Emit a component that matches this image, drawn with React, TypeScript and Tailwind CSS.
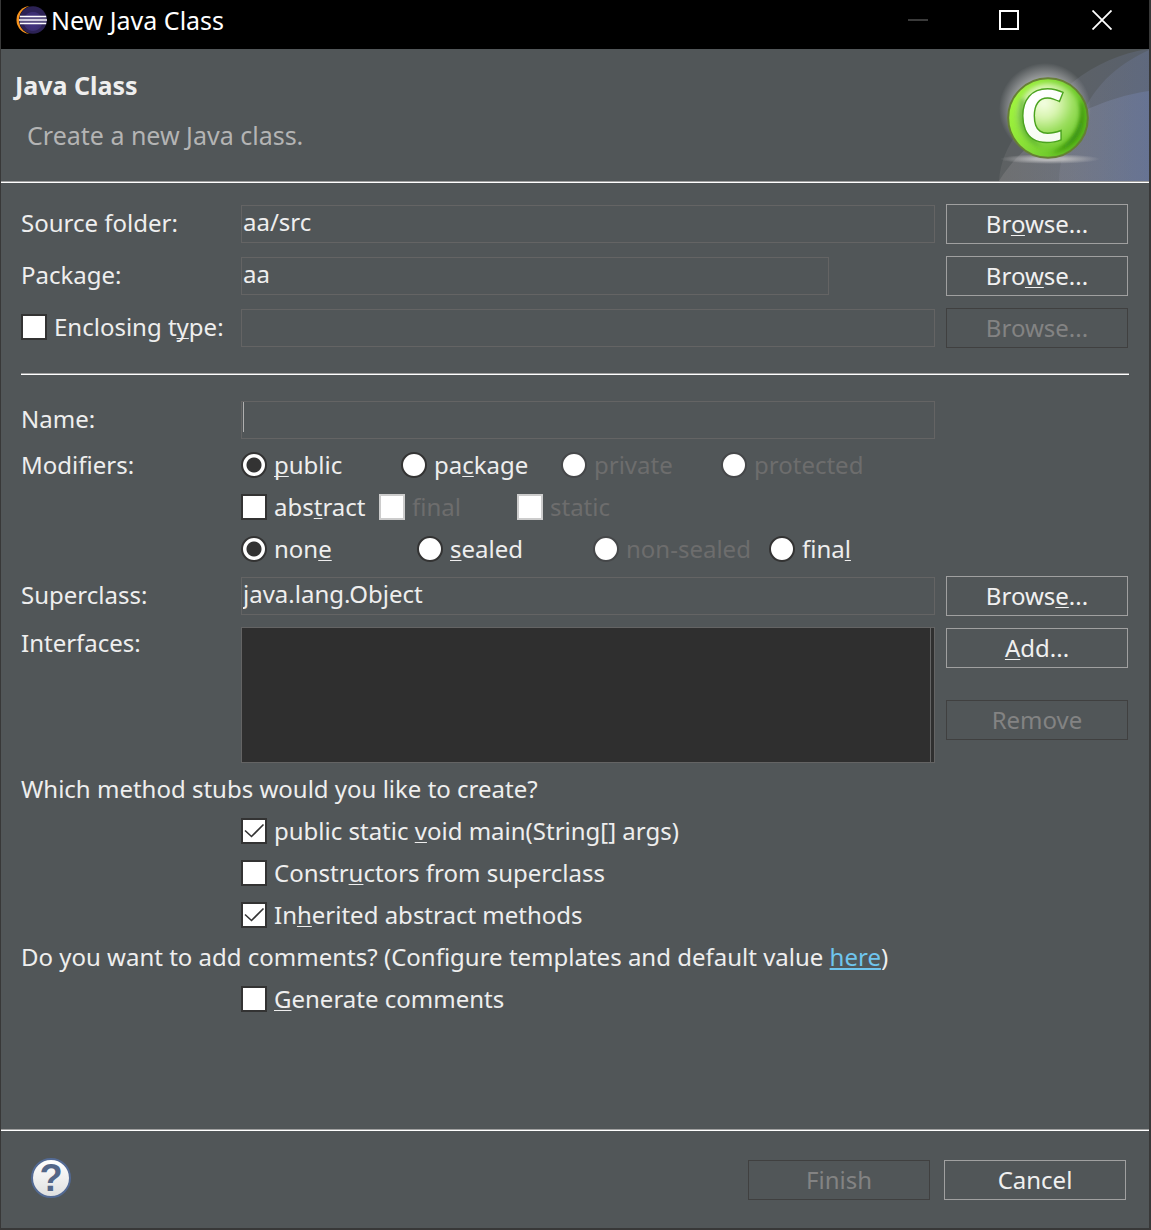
import type { ReactNode } from 'react';

// "&" marks the mnemonic character, as in SWT labels
function Mnemonic({ text }: { text: string }) {
  const i = text.indexOf('&');
  if (i < 0) return <span>{text}</span>;
  return (
    <span className="whitespace-pre">
      {text.slice(0, i)}
      <u className="decoration-1 underline-offset-2 [text-decoration-skip-ink:none]">{text[i + 1]}</u>
      {text.slice(i + 2)}
    </span>
  );
}

function PushButton({ text, disabled }: { text: string; disabled?: boolean }) {
  return (
    <button
      type="button"
      disabled={disabled}
      className="h-10 w-[182px] shrink-0 border border-[#a0a0a0] text-[#f0f0f0] disabled:border-[#404040] disabled:text-[#838383]"
    >
      <Mnemonic text={text} />
    </button>
  );
}

function Radio({ name, text, checked, disabled }: { name: string; text: string; checked?: boolean; disabled?: boolean }) {
  return (
    <label className={`flex h-[42px] items-center gap-[7px] ${disabled ? 'text-[#6d6d6d]' : ''}`}>
      <input
        type="radio"
        name={name}
        defaultChecked={checked}
        disabled={disabled}
        className="size-[26px] shrink-0 appearance-none rounded-full border-2 border-[#333333] bg-white checked:bg-[radial-gradient(circle,#333333_7px,#ffffff_8px)] disabled:border-[#454749]"
      />
      <Mnemonic text={text} />
    </label>
  );
}

function Check({ text, checked, disabled }: { text: string; checked?: boolean; disabled?: boolean }) {
  return (
    <label className={`flex h-[42px] items-center gap-[7px] ${disabled ? 'text-[#6d6d6d]' : ''}`}>
      <span className="relative flex shrink-0">
        <input
          type="checkbox"
          defaultChecked={checked}
          disabled={disabled}
          className="peer size-[26px] appearance-none border-2 border-[#333333] bg-white disabled:border-[#cccccc]"
        />
        <svg viewBox="0 0 26 26" className="pointer-events-none absolute inset-0 hidden size-[26px] peer-checked:block">
          <path d="M4 12.5 L10.5 18.5 L22.5 6.5" fill="none" stroke="#333333" strokeWidth="1.6" />
        </svg>
      </span>
      <Mnemonic text={text} />
    </label>
  );
}

function Field({ id, value, label, disabled, className = '' }: { id: string; value?: string; label?: string; disabled?: boolean; className?: string }) {
  return (
    <input
      id={id}
      type="text"
      aria-label={label}
      defaultValue={value}
      disabled={disabled}
      className={`h-[38px] min-w-0 flex-1 border border-[#646464] bg-transparent px-px pb-[6px] caret-transparent outline-none ${className}`}
    />
  );
}

function Row({ label, children, className = '' }: { label: ReactNode; children?: ReactNode; className?: string }) {
  return (
    <div className={`flex ${className}`}>
      <div className="w-[220px] shrink-0">{label}</div>
      {children}
    </div>
  );
}

function FieldLabel({ htmlFor, text }: { htmlFor: string; text: string }) {
  return <label htmlFor={htmlFor} className="block pb-[2px]">{text}</label>;
}

function Separator({ className = '' }: { className?: string }) {
  return <div className={`border-t border-b border-t-[#a0a0a0] border-b-white ${className}`} />;
}

function EclipseIcon() {
  return (
    <svg viewBox="0 0 32 30" className="h-[30px] w-8">
      <defs>
        <radialGradient id="moon" cx="0.5" cy="0.55" r="0.5">
          <stop offset="0" stopColor="#473788" />
          <stop offset="0.65" stopColor="#3b2e72" />
          <stop offset="0.72" stopColor="#2c2255" />
        </radialGradient>
      </defs>
      <circle cx="15.5" cy="15" r="14" fill="#f7941e" />
      <circle cx="18.5" cy="15" r="14.5" fill="#000000" />
      <circle cx="18" cy="15" r="13.8" fill="url(#moon)" />
      <path d="M4.8 13.2H31.5M4.8 16.8H31.5" stroke="#5a5182" strokeWidth="1.6" />
      <path d="M4.8 11.4H31.2M4 15H32M4.8 18.6H31.2" stroke="#ffffff" strokeWidth="1.5" />
    </svg>
  );
}

function WizardImage() {
  return (
    <svg viewBox="0 0 150 132" className="h-[132px] w-[150px]" role="img" aria-label="Java class">
      <defs>
        <linearGradient id="swoosh" gradientUnits="userSpaceOnUse" x1="0" x2="150" y1="0" y2="0">
          <stop offset="0" stopColor="#8e8c8c" />
          <stop offset="0.5" stopColor="#8a8fa4" />
          <stop offset="1" stopColor="#7688bc" />
        </linearGradient>
        <radialGradient id="ball" cx="0.42" cy="0.3" r="0.75">
          <stop offset="0" stopColor="#f6ffe6" />
          <stop offset="0.3" stopColor="#d8f5b0" />
          <stop offset="0.6" stopColor="#9ade5c" />
          <stop offset="1" stopColor="#6cc828" />
        </radialGradient>
        <linearGradient id="rim" x1="0" y1="0.3" x2="1" y2="0.7">
          <stop offset="0" stopColor="#a2f63e" />
          <stop offset="0.5" stopColor="#7ed634" />
          <stop offset="1" stopColor="#54b31a" />
        </linearGradient>
        <radialGradient id="glow">
          <stop offset="0.5" stopColor="#e8e8e8" stopOpacity="0.75" />
          <stop offset="1" stopColor="#e8e8e8" stopOpacity="0" />
        </radialGradient>
        <radialGradient id="shadow">
          <stop offset="0.3" stopColor="#bcbcbe" stopOpacity="0.9" />
          <stop offset="1" stopColor="#bcbcbe" stopOpacity="0" />
        </radialGradient>
        <linearGradient id="letter" x1="0" y1="0" x2="0.3" y2="1">
          <stop offset="0" stopColor="#e4f6d6" />
          <stop offset="0.4" stopColor="#ffffff" />
          <stop offset="1" stopColor="#f4fbee" />
        </linearGradient>
        <filter id="soft" x="-0.3" y="-0.3" width="1.6" height="1.6">
          <feGaussianBlur stdDeviation="2" />
        </filter>
      </defs>
      <g fill="url(#swoosh)">
        <path d="M150 0C122 4 97 15 74 33C42 57 3 86 0 132H150Z" opacity="0.2" />
        <path d="M150 1C122 14 103 30 89 54C74 78 61 100 60 132H150Z" opacity="0.22" />
        <path d="M150 42C128 45 108 52 91 59C55 73 20 100 0 132H150Z" opacity="0.35" />
      </g>
      <circle cx="46" cy="60" r="46" fill="url(#glow)" />
      <ellipse cx="51" cy="110" rx="50" ry="5" fill="url(#shadow)" />
      <circle cx="49" cy="69" r="39.8" fill="url(#rim)" stroke="#667f35" strokeWidth="2" />
      <circle cx="50" cy="67" r="33" fill="url(#ball)" filter="url(#soft)" />
      <path d="M80 50C86 70 76 94 52 104C74 101 89 82 84 56Z" fill="#338a08" filter="url(#soft)" />
      <path d="M22 50C16 72 24 92 42 98C30 86 24 70 26 50Z" fill="#4fa824" opacity="0.7" filter="url(#soft)" />
      <text
        x="43"
        y="93"
        textAnchor="middle"
        fontSize="74"
        fontWeight="700"
        fill="url(#letter)"
        stroke="#4ba31f"
        strokeWidth="1.4"
        className="font-['Open_Sans',sans-serif]"
      >
        C
      </text>
    </svg>
  );
}

export default function App() {
  return (
    <div className="flex min-h-screen flex-col border-r-2 border-b-2 border-l border-[#383838] bg-[#515658] font-['Noto_Sans',sans-serif] text-[24px] leading-8 text-[#eeeeee]">
      <header className="flex h-[49px] items-start bg-black text-white">
        <div className="flex flex-1 items-center pt-1 pl-[14px]">
          <EclipseIcon />
          <h1 className="pl-[4px] text-[25px]">New Java Class</h1>
        </div>
        <div className="flex">
          <button type="button" aria-label="Minimize" disabled className="flex h-10 w-[90px] items-center justify-center">
            <svg viewBox="0 0 20 20" className="size-5"><path d="M0 10H20" stroke="#3a3a3a" strokeWidth="2" /></svg>
          </button>
          <button type="button" aria-label="Maximize" className="flex h-10 w-[92px] items-center justify-center">
            <svg viewBox="0 0 20 20" className="size-5"><path d="M1 1H19V19H1Z" fill="none" stroke="#ffffff" strokeWidth="2" /></svg>
          </button>
          <button type="button" aria-label="Close" className="flex h-10 w-[94px] items-center justify-center">
            <svg viewBox="0 0 20 20" className="size-5"><path d="M0.5 0.5L19.5 19.5M19.5 0.5L0.5 19.5" stroke="#ffffff" strokeWidth="1.8" /></svg>
          </button>
        </div>
      </header>

      <section className="flex h-[132px] justify-between">
        <div className="pt-5 pl-[14px]">
          <h2 className="text-[25px] font-bold">Java Class</h2>
          <p className="pt-[18px] pl-3 text-[25px] text-[#b4b4b4]">Create a new Java class.</p>
        </div>
        <WizardImage />
      </section>
      <Separator />

      <form className="flex flex-col px-5 pt-[21px]">
        <div className="flex flex-col gap-3">
          <Row className="items-center" label={<FieldLabel htmlFor="source" text="Source folder:" />}>
            <Field id="source" value="aa/src" className="mr-[11px]" />
            <div className="mr-px flex"><PushButton text="Br&owse..." /></div>
          </Row>
          <Row className="items-center" label={<FieldLabel htmlFor="package" text="Package:" />}>
            <Field id="package" value="aa" className="mr-[117px]" />
            <div className="mr-px flex"><PushButton text="Bro&wse..." /></div>
          </Row>
          <Row className="h-10 items-center" label={<div className="pb-[2px]"><Check text="Enclosing t&ype:" /></div>}>
            <Field id="enclosing" label="Enclosing type" disabled className="mr-[11px]" />
            <div className="mr-px flex"><PushButton text="Browse..." disabled /></div>
          </Row>
        </div>

        <Separator className="my-[25px]" />

        <Row className="h-10 items-center" label={<FieldLabel htmlFor="name" text="Name:" />}>
          <div className="relative mr-[194px] flex flex-1">
            <Field id="name" />
            <span className="absolute top-px left-[2px] h-[30px] w-px bg-[#b0b0b0]" />
          </div>
        </Row>

        <Row className="mt-1 mb-[6px]" label={<div className="flex h-[42px] items-center">Modifiers:</div>}>
          <div>
            <div className="grid grid-cols-[160px_160px_160px_auto]">
              <Radio name="access" text="&public" checked />
              <Radio name="access" text="pa&ckage" />
              <Radio name="access" text="private" disabled />
              <Radio name="access" text="protected" disabled />
            </div>
            <div className="grid grid-cols-[138px_138px_138px]">
              <Check text="abs&tract" />
              <Check text="final" disabled />
              <Check text="static" disabled />
            </div>
            <div className="grid grid-cols-[176px_176px_176px_auto]">
              <Radio name="sealing" text="non&e" checked />
              <Radio name="sealing" text="&sealed" />
              <Radio name="sealing" text="non-sealed" disabled />
              <Radio name="sealing" text="fina&l" />
            </div>
          </div>
        </Row>

        <Row className="items-center" label={<FieldLabel htmlFor="superclass" text="Superclass:" />}>
          <Field id="superclass" value="java.lang.Object" className="mr-[11px]" />
          <div className="mr-px flex"><PushButton text="Brows&e..." /></div>
        </Row>

        <Row className="mt-[11px]" label={<span id="interfaces">Interfaces:</span>}>
          <div
            role="listbox"
            aria-labelledby="interfaces"
            className="mr-[11px] flex h-[136px] flex-1 justify-end border border-[#646464] bg-[#2f2f2f]"
          >
            <div className="w-1 border-l border-[#646464]" />
          </div>
          <div className="mt-px mr-px flex flex-col gap-8">
            <PushButton text="&Add..." />
            <PushButton text="Remove" disabled />
          </div>
        </Row>

        <p className="mt-[5px] flex h-[42px] items-center">Which method stubs would you like to create?</p>
        <div className="pl-[220px]">
          <Check text="public static &void main(String[] args)" checked />
          <Check text="Constr&uctors from superclass" />
          <Check text="In&herited abstract methods" checked />
        </div>
        <p className="flex h-[42px] items-center whitespace-pre">
          Do you want to add comments? (Configure templates and default value{' '}
          <a href="#templates" className="text-[#6fc5ee] underline decoration-2 underline-offset-2">here</a>)
        </p>
        <div className="pl-[220px]">
          <Check text="&Generate comments" />
        </div>
      </form>

      <footer className="mt-auto">
        <Separator />
        <div className="flex items-center gap-[14px] pt-[29px] pr-[23px] pb-7 pl-[30px]">
          <button
            type="button"
            aria-label="Help"
            className="-mt-1 mr-auto flex size-10 items-center justify-center rounded-full border-2 border-[#536a94] bg-linear-to-b from-white to-[#e0e0e0] font-['Liberation_Sans',sans-serif] text-[38px] leading-none font-bold text-[#536688]"
          >
            ?
          </button>
          <PushButton text="Finish" disabled />
          <PushButton text="Cancel" />
        </div>
      </footer>
    </div>
  );
}
